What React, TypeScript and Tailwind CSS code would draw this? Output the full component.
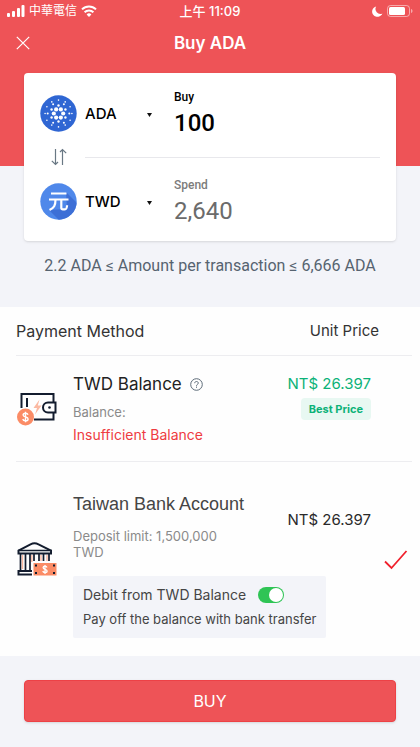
import { useState } from "react";
import type { ReactNode } from "react";

function StatusBar() {
  return (
    <div className="grid grid-cols-[1fr_auto_1fr] items-center h-[22px] px-[7px] text-sm leading-5 font-medium">
      <div className="flex items-center gap-1">
        <svg width="18" height="12" viewBox="0 0 18 12" fill="currentColor" aria-hidden="true">
          <rect x="0" y="8" width="3" height="4" rx="1" />
          <rect x="5" y="6" width="3" height="6" rx="1" />
          <rect x="10" y="3" width="3" height="9" rx="1" />
          <rect x="14.5" y="0" width="3" height="12" rx="1" />
        </svg>
        <span className="text-xs leading-5 font-normal whitespace-nowrap">中華電信</span>
        <svg width="16" height="12" viewBox="0 0 16 12" fill="none" stroke="currentColor" strokeWidth="2" aria-hidden="true">
          <path d="M1 4.4a10 10 0 0 1 14 0" />
          <path d="M3.6 7.2a6.3 6.3 0 0 1 8.8 0" />
          <path d="M8 12L5.6 9.4a3.4 3.4 0 0 1 4.8 0z" fill="currentColor" stroke="none" />
        </svg>
      </div>
      <div className="text-[13px] leading-5 whitespace-nowrap">上午 11:09</div>
      <div className="flex items-center justify-end gap-1">
        <svg width="11" height="11" viewBox="0 0 11 11" fill="currentColor" aria-hidden="true">
          <path d="M4.200.4a5.300 5.300 0 1 0 6.200 7A4.900 4.900 0 0 1 4.200.4z" />
        </svg>
        <svg width="26" height="12" viewBox="0 0 26 12" aria-hidden="true">
          <rect x="0.5" y="0.5" width="22" height="11" rx="3" fill="none" stroke="#fff" strokeOpacity="0.5" />
          <rect x="2" y="2" width="16" height="8" rx="1.5" fill="#fff" />
          <path d="M24 4v4c1-.3 1.500-1 1.500-2S25 4.300 24 4z" fill="#fff" fillOpacity="0.5" />
        </svg>
      </div>
    </div>
  );
}

function AdaIcon() {
  const ring = (count: number, radius: number, size: number, turn: number) =>
    Array.from({ length: count }, (_, i) => {
      const a = ((i * 360) / count + turn) * (Math.PI / 180);
      return <circle key={`${radius}-${i}`} cx={18.5 + radius * Math.cos(a)} cy={18.5 + radius * Math.sin(a)} r={size} />;
    });
  return (
    <svg width="37" height="37" viewBox="0 0 37 37" aria-hidden="true">
      <circle cx="18.5" cy="18.5" r="18.2" fill="#2f66d3" />
      <g fill="#fff">
        {ring(6, 4.7, 2.1, 0)}
        {ring(6, 8, 1.2, 30)}
        {ring(6, 10.8, 1, 0)}
        {ring(12, 13.4, 0.8, 0)}
      </g>
    </svg>
  );
}

function TwdIcon() {
  return (
    <svg width="37" height="37" viewBox="0 0 37 37" aria-hidden="true">
      <defs>
        <clipPath id="twd-disc">
          <circle cx="18.5" cy="18.5" r="18.2" />
        </clipPath>
      </defs>
      <g clipPath="url(#twd-disc)">
        <rect width="37" height="37" fill="#4f88ea" />
        <path d="M26 9l14 14v17H22L9 27l18-1z" fill="#3d6fd6" />
      </g>
      <g fill="none" stroke="#fff" strokeWidth="2.2">
        <path d="M11 10.500h15.500M9 16.500h19.500M15.500 16.500c0 6-1.500 8.500-6 10.500M21.300 16.500v8.200c0 1.200.5 1.600 1.600 1.600h2c1.500 0 2-.6 2.200-4" />
      </g>
    </svg>
  );
}

function WalletIcon() {
  return (
    <svg width="40" height="36" viewBox="0 0 40 36" fill="none" aria-hidden="true">
      <path d="M4.500 17V3h32v8M36.500 22v6.500H17" stroke="#131c2e" strokeWidth="2" />
      <path d="M10 7v9" stroke="#131c2e" strokeWidth="2" />
      <path d="M38.500 11.500h-7.500a5 5 0 0 0 0 10h7.500z" stroke="#131c2e" strokeWidth="2" />
      <circle cx="32.500" cy="16.500" r="1.300" fill="#131c2e" />
      <path d="M22.500 8.500l-6 8.500h3.500l-2 6.500 6.500-9h-3.700z" fill="#fbb9a2" />
      <circle cx="8.500" cy="26" r="8.500" fill="#fb8c66" />
      <path d="M11 23.800c-.3-1-1.200-1.500-2.500-1.500-1.400 0-2.400.7-2.400 1.800 0 2.600 5 1.200 5 3.800 0 1.200-1.100 1.900-2.600 1.900s-2.500-.7-2.700-1.800M8.500 20.800v10.400" stroke="#fff" strokeWidth="1.400" />
    </svg>
  );
}

function BankIcon() {
  return (
    <svg width="40" height="34" viewBox="0 0 40 34" fill="none" aria-hidden="true">
      <path d="M1.500 11.500v-3l12-6.200c2.500-1.200 5.500-1.200 8 0l12.500 6.200v3z" stroke="#131c2e" strokeWidth="2" />
      <path d="M1 8.500h34" stroke="#131c2e" strokeWidth="1.600" />
      <path d="M3.500 12v16M8.500 12v16M13 12v16" stroke="#131c2e" strokeWidth="1.700" />
      <path d="M17 12v7M22 12v7M26.500 12v7M32 12v7" stroke="#131c2e" strokeWidth="1.700" />
      <path d="M5.500 13v14M14.800 13v7M24 13v6M30 13v6" stroke="#fbb9a2" strokeWidth="1.400" />
      <path d="M15 29H1.500v3.500H15" stroke="#131c2e" strokeWidth="2" />
      <rect x="16.500" y="21" width="23" height="12.500" fill="#fb8c66" />
      <path d="M18 22.500h2v2h-2zM36 22.500h2v2h-2zM18 30h2v2h-2zM36 30h2v2h-2z" fill="#131c2e" />
      <path d="M30 25.500c-.3-.9-1-1.300-2-1.300s-1.900.5-1.900 1.400c0 2.200 4 1.200 4 3.300 0 1-.9 1.600-2.100 1.600s-2-.6-2.200-1.500M28 23v9" stroke="#fff" strokeWidth="1.300" />
    </svg>
  );
}

type AmountRowProps = {
  icon: ReactNode;
  currency: string;
  label: string;
  id: string;
  value: string;
  labelClass: string;
  valueClass: string;
};

function AmountRow({ icon, currency, label, id, value, labelClass, valueClass }: AmountRowProps) {
  return (
    <div className="flex items-center h-16 px-4">
      {icon}
      <div className="relative ml-2 w-[73px] shrink-0">
        <select aria-label={`${label} currency`} defaultValue={currency} className="w-full appearance-none bg-transparent text-[15px] leading-6 font-medium text-black outline-none">
          <option>{currency}</option>
        </select>
        <svg className="pointer-events-none absolute right-1.5 top-3" width="5" height="4" viewBox="0 0 5 4" aria-hidden="true">
          <path d="M0 0h5L2.500 4z" fill="#111" />
        </svg>
      </div>
      <div className="ml-4 flex min-w-0 flex-1 flex-col font-['Roboto','Noto_Sans',sans-serif]">
        <label htmlFor={id} className={labelClass}>{label}</label>
        <input id={id} defaultValue={value} inputMode="decimal" className={valueClass} />
      </div>
    </div>
  );
}

function PaymentRadio({ label, checked, onSelect }: { label: string; checked: boolean; onSelect: () => void }) {
  return (
    <label className="relative ml-[13px] mr-1 flex size-6 shrink-0 cursor-pointer self-center">
      <input type="radio" name="method" aria-label={label} checked={checked} onChange={onSelect} className="size-6 appearance-none outline-none" />
      {checked && (
        <svg className="pointer-events-none absolute inset-0" width="24" height="24" viewBox="0 0 24 24" fill="none" aria-hidden="true">
          <path d="M1 14.500l6.500 6.500L22.500 4" stroke="#f0202c" strokeWidth="1.800" />
        </svg>
      )}
    </label>
  );
}

export default function App() {
  const [method, setMethod] = useState("bank");
  const [debit, setDebit] = useState(true);

  return (
    <div className="min-h-screen bg-[#f3f4f9] font-['Inter','Noto_Sans_CJK_TC',sans-serif] text-[#333]">
      <header className="bg-[#ee5357] pb-[102px] text-white">
        <StatusBar />
        <div className="grid h-[42px] grid-cols-[1fr_auto_1fr] items-center px-4">
          <button type="button" aria-label="Close" className="size-[14px]">
            <svg width="14" height="14" viewBox="0 0 14 14" stroke="currentColor" strokeWidth="1.200" aria-hidden="true">
              <path d="M.8.8l12.400 12.400M13.200.8L.8 13.200" />
            </svg>
          </button>
          <h1 className="text-[17px] leading-6 font-semibold">Buy ADA</h1>
        </div>
      </header>

      <main>
        <section className="relative mx-6 -mt-[93px] rounded bg-white py-2 shadow-sm">
          <AmountRow
            icon={<AdaIcon />}
            currency="ADA"
            label="Buy"
            id="buy"
            value="100"
            labelClass="text-xs leading-5 font-medium text-black"
            valueClass="h-8 w-full bg-transparent text-2xl leading-8 font-medium text-black outline-none"
          />
          <div className="flex h-6 items-center pr-4 pl-[27px]">
            <button type="button" aria-label="Swap currencies">
              <svg width="16" height="18" viewBox="0 0 16 18" fill="none" stroke="#697884" strokeWidth="1.200" aria-hidden="true">
                <path d="M4.500 1v15.500M.8 12.800l3.700 3.700 2.500-2.500M11.500 17V1.500M15.200 5.200l-3.700-3.700L9 4" />
              </svg>
            </button>
            <div className="ml-[18px] flex-1 border-t border-[#e8e8ec]" />
          </div>
          <AmountRow
            icon={<TwdIcon />}
            currency="TWD"
            label="Spend"
            id="spend"
            value="2,640"
            labelClass="text-xs leading-5 font-medium text-[#7c7c7c]"
            valueClass="h-8 w-full bg-transparent text-2xl leading-8 text-[#6b6b6b] outline-none"
          />
        </section>

        <p className="mt-3 mb-7 text-center font-['Roboto','Noto_Sans',sans-serif] text-base leading-[26px] text-[#566370]">2.2 ADA ≤ Amount per transaction ≤ 6,666 ADA</p>

        <section className="bg-[#fefefe] pr-2 pl-4">
          <div className="flex h-[49px] items-center justify-between border-b border-[#ededf0] pr-[33px] text-base leading-6">
            <h2>Payment Method</h2>
            <span className="text-[15px]">Unit Price</span>
          </div>

          <div className="flex border-b border-[#ededf0]">
            <div className="w-[57px] shrink-0 self-center pl-px">
              <WalletIcon />
            </div>
            <div className="flex flex-1 justify-between pt-4 pb-[14px]">
              <div>
                <div className="flex items-center gap-2">
                  <h3 className="text-[17px] leading-6 whitespace-nowrap text-[#222]">TWD Balance</h3>
                  <button type="button" aria-label="About TWD Balance">
                    <svg width="13" height="13" viewBox="0 0 13 13" fill="none" stroke="#5d6b78" aria-hidden="true">
                      <circle cx="6.500" cy="6.500" r="5.800" />
                      <path d="M4.700 5.200c0-1.100.8-1.700 1.800-1.700s1.800.6 1.800 1.600c0 1.300-1.800 1.300-1.800 2.700M6.500 8.600v1.200" />
                    </svg>
                  </button>
                </div>
                <p className="mt-1.5 text-[13px] leading-5 text-[#8a8a8a]">Balance:</p>
                <p className="mt-px text-sm leading-6 text-[#ee3b41]">Insufficient Balance</p>
              </div>
              <div className="flex flex-col items-end">
                <span className="text-[15px] leading-6 whitespace-nowrap text-[#0cb278]">NT$ 26.397</span>
                <span className="mt-0.5 rounded bg-[#e8f8f2] px-2 text-[11px] leading-[22px] font-bold text-[#0cb278]">Best Price</span>
              </div>
            </div>
            <PaymentRadio label="TWD Balance" checked={method === "twd"} onSelect={() => setMethod("twd")} />
          </div>

          <div className="flex">
            <div className="w-[57px] shrink-0 self-center pl-px">
              <BankIcon />
            </div>
            <div className="flex-1 pt-[30px] pb-[18px]">
              <div className="flex justify-between">
                <div className="max-w-[176px]">
                  <h3 className="text-lg leading-6 whitespace-nowrap text-[#454545] font-['Liberation_Sans',Arial,sans-serif]">Taiwan Bank Account</h3>
                  <p className="mt-3 text-[13px] leading-4 text-[#8a8a8a]">Deposit limit: 1,500,000 TWD</p>
                </div>
                <span className="mt-4 text-[15px] leading-6 whitespace-nowrap text-[#2a2a2a]">NT$ 26.397</span>
              </div>
              <div className="mt-4 w-fit rounded-xs bg-[#f3f4f9] px-2.5 py-[7px] text-[13px] leading-6 whitespace-nowrap text-[#454545]">
                <label className="flex items-center gap-3 text-sm leading-6">
                  Debit from TWD Balance
                  <span className="relative flex h-4 w-[26px]">
                    <input
                      type="checkbox"
                      role="switch"
                      checked={debit}
                      onChange={(e) => setDebit(e.target.checked)}
                      className="peer h-4 w-[26px] appearance-none rounded-full bg-gray-300 checked:bg-[#2fc455]"
                    />
                    <span className="pointer-events-none absolute top-px left-px size-[14px] rounded-full bg-white peer-checked:left-[11px]" />
                  </span>
                </label>
                <p>Pay off the balance with bank transfer</p>
              </div>
            </div>
            <PaymentRadio label="Taiwan Bank Account" checked={method === "bank"} onSelect={() => setMethod("bank")} />
          </div>
        </section>

        <div className="px-6 pt-6 pb-6">
          <button type="button" className="h-[42px] w-full rounded border border-[#ed4146] bg-[#ee5357] text-base leading-6 text-white shadow-sm">
            BUY
          </button>
        </div>
      </main>
    </div>
  );
}
